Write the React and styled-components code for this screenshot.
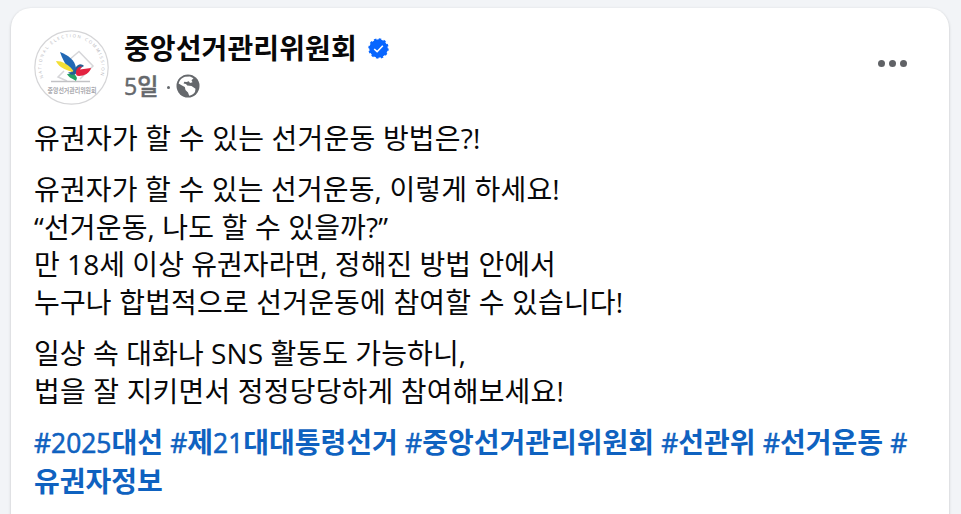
import styled, { createGlobalStyle } from "styled-components";

const GlobalStyle = createGlobalStyle`
    * {
        box-sizing: border-box;
    }
    body {
        margin: 0;
        background: #f2f4f7;
        font-family: "Open Sans", "Noto Sans CJK KR", sans-serif;
        overflow: hidden;
    }
`
const Page = styled.div`
    height: 514px;
    padding: 8px 12px 0 11px;
    overflow: hidden;
`
const Card = styled.article`
    height: 540px;
    padding: 22px 24px 0 23px;
    background: #fff;
    border-radius: 20px;
    box-shadow: 0 1px 3px rgba(0, 0, 0, 0.22);
`
const Header = styled.header`
    display: flex;
    height: 75px;
`
const Info = styled.div`
    flex: 1;
    margin-left: 15px;
`
const NameRow = styled.div`
    display: flex;
    align-items: center;
    gap: 11px;
    height: 37px;
`
const Name = styled.h2`
    margin: 0;
    font-size: 28px;
    font-weight: 700;
    line-height: 37px;
    letter-spacing: 0.1px;
    color: #080809;
    white-space: nowrap;
`
const MetaRow = styled.div`
    display: flex;
    align-items: center;
    height: 38px;
    color: #65686c;
`
const Time = styled.span`
    font-size: 23px;
    font-weight: 500;
    line-height: 38px;
    -webkit-text-stroke: 0.5px #65686c;
`
const Dot = styled.span`
    width: 3px;
    height: 3px;
    margin: 2px 6px 0 9px;
    border-radius: 50%;
    background: #65686c;
`
const MoreButton = styled.button`
    display: flex;
    align-items: center;
    gap: 3.6px;
    height: 67px;
    margin-right: 18px;
    padding: 0;
    border: none;
    background: none;

    span {
        width: 7.4px;
        height: 7.4px;
        border-radius: 50%;
        background: #606266;
    }
`
const Body = styled.div`
    padding-top: 15px;
`
const Paragraph = styled.p`
    margin: 0 0 13.5px;
    font-size: 28px;
    line-height: 37.65px;
    color: #080809;
`
const Line = styled.span`
    display: block;
    white-space: nowrap;
    letter-spacing: ${props => props.$spacing || 0}px;
`
const Tag = styled.a`
    color: #0f62c0;
    font-weight: 700;
`
const Latin = styled.span`
    font-size: 26.4px;
    font-weight: 500;
    -webkit-text-stroke: 0.6px #0f62c0;
`

const Logo = () => (
    <svg width="75" height="75" viewBox="0 0 75 75">
        <defs>
            <path id="ring" d="M9.5 48 A30 30 0 1 1 65.5 48" />
        </defs>
        <circle cx="37.5" cy="37.5" r="36.7" fill="#fff" stroke="#d5d5d7" strokeWidth="1.2" />
        <text fontSize="4.3" fill="#b4b4ba" fontFamily="Open Sans" textLength="113">
            <textPath href="#ring" textLength="113">NATIONAL ELECTION COMMISSION</textPath>
        </text>
        <path d="M35 30 L45 21.5 L59 36 L46 49 M33 51 L24 47 L30 41" fill="none" stroke="#d6d6d9" strokeWidth="1.5" />
        <path d="M17 51.5 H56" stroke="#c2c2c5" strokeWidth="1.3" />
        <path d="M26 22 C34 25 41 30 42 38 L41 45 C36 41 30 34 26 22 Z" fill="#2168b4" />
        <path d="M22 31 C28 31 35 34 41 43 L34 40.5 C29 38.5 24 36 22 31 Z" fill="#f3df35" />
        <path d="M33 44 C38 43 41 43 43 48 L42 51 C38 48 35 48 33 44 Z" fill="#26a265" />
        <path d="M34 42 C38 43 41 41 42 37 C45 33 48 34 50 36 L45 39 C43 45 38 47 34 42 Z" fill="#275f94" />
        <path d="M42 43 C42 38 45 36.5 48 36.5 L46 39.5 L57 38 C56 43 50 46 45 46 C42.5 46 42 45 42 43 Z" fill="#e32240" />
        <text x="13.5" y="62.5" fontSize="6.3" fontWeight="700" fill="#a8a8ad" fontFamily="Noto Sans CJK KR" textLength="49" lengthAdjust="spacingAndGlyphs">중앙선거관리위원회</text>
    </svg>
)

const Verified = () => (
    <svg width="21" height="21" viewBox="0 0 21 21">
        <circle cx="10.5" cy="10.5" r="9.3" fill="#0866ff" />
        <circle cx="10.5" cy="10.5" r="9.2" fill="none" stroke="#0866ff" strokeWidth="2" strokeDasharray="2.41 2.41" />
        <path d="M6.2 11 L9.1 13.7 L14.8 7.7" fill="none" stroke="#fff" strokeWidth="1.6" />
    </svg>
)

const Globe = () => (
    <svg width="24" height="24" viewBox="0 0 24 24">
        <circle cx="12" cy="12" r="11.5" fill="#65686c" />
        <path d="M2.6 9.5 C3.6 6 6 3.6 9 2.8 L14 2.6 L17.5 4.2 L15.5 6.2 L16.5 8.2 L14 9 L12.8 7.2 L10.5 8 L8.3 7.8 L7.6 9.6 L10 10 L11.2 11.6 L15.5 12 L19.5 14.8 L19 18 C17.5 20.2 15.5 21.4 13.2 21.8 L12 18.5 L9.5 16 L8.8 13 L6 11.6 Z" fill="#fff" />
    </svg>
)

const paragraphs = [
    [{ text: "유권자가 할 수 있는 선거운동 방법은?!", spacing: 0.2 }],
    [
        { text: "유권자가 할 수 있는 선거운동, 이렇게 하세요!", spacing: 0.15 },
        { text: "“선거운동, 나도 할 수 있을까?”", spacing: 0.15 },
        { text: "만 18세 이상 유권자라면, 정해진 방법 안에서", spacing: 0.04 },
        { text: "누구나 합법적으로 선거운동에 참여할 수 있습니다!", spacing: 0.17 },
    ],
    [
        { text: "일상 속 대화나 SNS 활동도 가능하니,", spacing: 0.08 },
        { text: "법을 잘 지키면서 정정당당하게 참여해보세요!", spacing: 0.17 },
    ],
]

const App = () => {
    return (
        <>
            <GlobalStyle />
            <Page>
                <Card>
                    <Header>
                        <Logo />
                        <Info>
                            <NameRow>
                                <Name>중앙선거관리위원회</Name>
                                <Verified />
                            </NameRow>
                            <MetaRow>
                                <Time>5일</Time>
                                <Dot />
                                <Globe />
                            </MetaRow>
                        </Info>
                        <MoreButton aria-label="더 보기">
                            <span />
                            <span />
                            <span />
                        </MoreButton>
                    </Header>
                    <Body>
                        {paragraphs.map((lines, i) => (
                            <Paragraph key={i}>
                                {lines.map((line, j) => (
                                    <Line key={j} $spacing={line.spacing}>{line.text}</Line>
                                ))}
                            </Paragraph>
                        ))}
                        <Paragraph>
                            <Line>
                                <Tag><Latin>#2025</Latin>대선</Tag>{" "}
                                <Tag><Latin>#</Latin>제<Latin>21</Latin>대대통령선거</Tag>{" "}
                                <Tag><Latin>#</Latin>중앙선거관리위원회</Tag>{" "}
                                <Tag><Latin>#</Latin>선관위</Tag>{" "}
                                <Tag><Latin>#</Latin>선거운동</Tag>{" "}
                                <Tag><Latin>#</Latin></Tag>
                            </Line>
                            <Line><Tag>유권자정보</Tag></Line>
                        </Paragraph>
                    </Body>
                </Card>
            </Page>
        </>
    )
}

export default App
